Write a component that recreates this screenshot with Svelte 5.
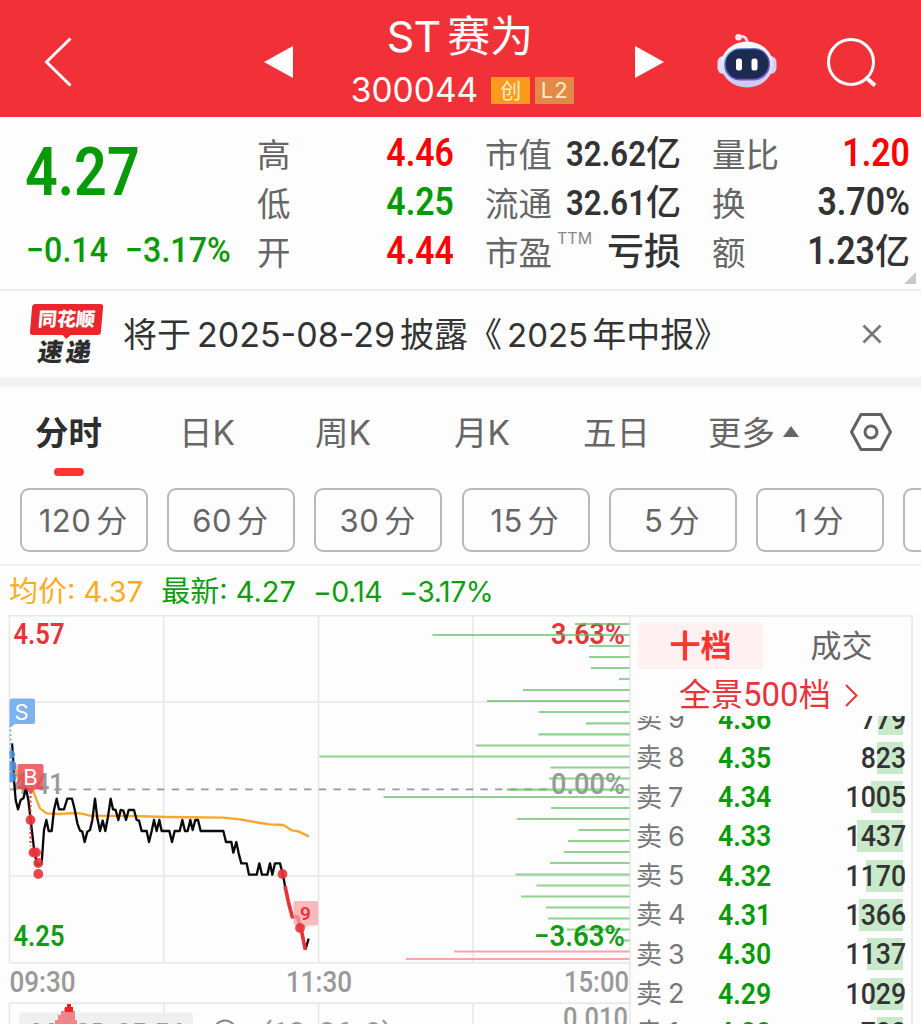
<!-- ============================================================
  App.svelte
  Stock detail page: header, quote stats, notice, period tabs,
  intraday chart and the ten-level order book.
  ============================================================ -->
<script lang="ts">
  // ── Quote stats ──────────────────────────────────────────
  const dayRange = [
    { label: '高', value: '4.46', tone: 'up' },
    { label: '低', value: '4.25', tone: 'down' },
    { label: '开', value: '4.44', tone: 'up' },
  ];

  const valuation = [
    { label: '市值', value: '32.62', unit: '亿' },
    { label: '流通', value: '32.61', unit: '亿' },
    { label: '市盈', note: 'TTM', value: '', unit: '亏损' },
  ];

  const activity = [
    { label: '量比', value: '1.20', unit: '', tone: 'up' },
    { label: '换', value: '3.70%', unit: '', tone: '' },
    { label: '额', value: '1.23', unit: '亿', tone: '' },
  ];

  // ── Tabs and minute periods ──────────────────────────────
  const tabs = ['分时', '日K', '周K', '月K', '五日'];
  const minutes = ['120', '60', '30', '15', '5', '1'];
  let activeTab = $state('分时');

  // ── Volume by price: [y, left edge] ──────────────────────
  const RIGHT = 629.5;
  const sellBars = [
    [624, 575], [635, 432.5], [646, 589], [657, 589], [668, 591], [679, 619],
    [690, 523], [701, 487], [712, 538.5], [723.3, 586], [734.3, 538.5],
    [745.5, 476], [756.5, 319.5], [767.5, 550.5], [778.5, 549], [789.7, 506.5],
    [797, 383.5], [808, 551], [819, 517], [830, 578.5], [841, 568], [852, 564],
    [863, 550], [874.5, 515.5], [885.5, 536.5], [896.5, 521], [907.5, 546],
    [918.5, 548], [929.5, 567], [940.5, 624],
  ];
  const buyBars = [[951.5, 454], [959, 406]];

  const buyDots = [[30.5, 820], [33.5, 852.5], [36, 852.5], [38.3, 863], [38.3, 874], [282.5, 874], [300, 928]];

  // ── Order book ───────────────────────────────────────────
  const asks = [
    { level: 9, price: '4.36', qty: 779, bar: 25 },
    { level: 8, price: '4.35', qty: 823, bar: 26.5 },
    { level: 7, price: '4.34', qty: 1005, bar: 32 },
    { level: 6, price: '4.33', qty: 1437, bar: 46 },
    { level: 5, price: '4.32', qty: 1170, bar: 37 },
    { level: 4, price: '4.31', qty: 1366, bar: 44 },
    { level: 3, price: '4.30', qty: 1137, bar: 36.5 },
    { level: 2, price: '4.29', qty: 1029, bar: 33 },
    { level: 1, price: '4.28', qty: 788, bar: 26 },
  ];
</script>

<main class="page">
  <!-- Header -->
  <header class="header">
    <svg width="28" height="50" viewBox="0 0 28 50" fill="none" stroke="#fff" stroke-width="3">
      <path d="M26.500 1.500 2.500 25l24 23.500" />
    </svg>
    <svg class="header__prev" width="29" height="32" viewBox="0 0 29 32"><path d="M0 16 29 0v32z" fill="#fff" /></svg>
    <div class="header__title">
      <h1 class="header__name"><span class="header__st">ST</span>赛为</h1>
      <div class="header__code">
        <span>300044</span>
        <span class="tag">创</span>
        <span class="tag tag--l2">L2</span>
      </div>
    </div>
    <svg width="29" height="32" viewBox="0 0 29 32"><path d="M29 16 0 0v32z" fill="#fff" /></svg>
    <svg class="header__robot" width="60" height="56" viewBox="0 0 60 56">
      <defs>
        <linearGradient id="shell" x1="0" y1="0" x2="0" y2="1">
          <stop offset="0" stop-color="#fff" />
          <stop offset="1" stop-color="#c9c6f2" />
        </linearGradient>
        <linearGradient id="rim" x1="0" y1="0" x2="1" y2="1">
          <stop offset="0" stop-color="#7fd4ea" />
          <stop offset="0.5" stop-color="#5b4fc0" />
          <stop offset="1" stop-color="#8d5be0" />
        </linearGradient>
      </defs>
      <path d="M21 3.500c6-1 9 1 9.500 7" fill="none" stroke="#f3dff0" stroke-width="2.600" />
      <circle cx="21.500" cy="4.200" r="3.300" fill="#f8e4ee" />
      <rect x="0.500" y="23" width="12" height="18" rx="6" fill="#e3e1fa" />
      <rect x="47.500" y="23" width="12" height="18" rx="6" fill="#d3cff5" />
      <ellipse cx="30" cy="31.500" rx="26" ry="23" fill="url(#shell)" />
      <rect x="7" y="15" width="46" height="32.500" rx="16" fill="url(#rim)" />
      <rect x="8.500" y="16.200" width="43" height="29.500" rx="14.700" fill="#1d2a51" />
      <rect x="19" y="25.500" width="6" height="12" rx="2.500" fill="#fff" />
      <rect x="34.500" y="25.500" width="6" height="12" rx="2.500" fill="#fff" />
    </svg>
    <svg class="header__search" width="52" height="52" viewBox="0 0 52 52" fill="none" stroke="#fff" stroke-width="3">
      <circle cx="25" cy="25" r="22.500" />
      <path d="m39.500 40 9.500 8.500" stroke-width="4" />
    </svg>
  </header>

  <!-- Quote -->
  <section class="quote">
    <div class="quote__main">
      <div class="quote__price"><span class="din din--left">4.27</span></div>
      <div class="quote__change">
        <span class="din din--left">−0.14</span>
        <span class="din din--left">−3.17%</span>
      </div>
    </div>
    <dl class="stats stats--range">
      {#each dayRange as item}
        <div class="stats__row">
          <dt>{item.label}</dt>
          <dd class={item.tone}><span class="din din--big">{item.value}</span></dd>
        </div>
      {/each}
    </dl>
    <dl class="stats stats--value">
      {#each valuation as item}
        <div class="stats__row">
          <dt>{item.label}{#if item.note}<sup>{item.note}</sup>{/if}</dt>
          <dd><span class="din">{item.value}</span><span class:loss={item.note}>{item.unit}</span></dd>
        </div>
      {/each}
    </dl>
    <dl class="stats stats--activity">
      {#each activity as item}
        <div class="stats__row">
          <dt>{item.label}</dt>
          <dd class={item.tone}><span class="din din--big">{item.value}</span>{item.unit}</dd>
        </div>
      {/each}
    </dl>
    <svg class="quote__corner" width="12" height="12" viewBox="0 0 12 12"><path d="M12 0v12H0z" fill="#c8c8c8" /></svg>
  </section>

  <!-- Notice -->
  <section class="notice">
    <div class="logo">
      <div class="logo__brand"><span>同花顺</span></div>
      <div class="logo__sub">速递</div>
    </div>
    <p class="notice__text">将于<span class="notice__date">2025-08-29</span>披露《<span class="notice__year">2025</span>年中报》</p>
    <svg width="20" height="20" viewBox="0 0 20 20" stroke="#777" stroke-width="2.600"><path d="m1.500 1.500 17 17m0-17-17 17" /></svg>
  </section>

  <!-- Period tabs -->
  <nav class="tabs">
    {#each tabs as tab}
      <button class="tabs__item" class:tabs__item--active={tab === activeTab} onclick={() => (activeTab = tab)}>{tab}</button>
    {/each}
    <button class="tabs__item tabs__more">
      更多
      <svg width="16" height="11" viewBox="0 0 16 11"><path d="M8 0 16 11H0z" fill="#666" /></svg>
    </button>
    <svg class="tabs__settings" width="42" height="38" viewBox="0 0 42 38" fill="none" stroke="#626262" stroke-width="3" stroke-linejoin="round">
      <path d="M11 1.500h20L40.500 19 31 36.500H11L1.500 19z" />
      <circle cx="21" cy="19" r="6" />
    </svg>
  </nav>

  <div class="minutes">
    {#each minutes as minute}
      <button class="minutes__item"><span>{minute}</span>分</button>
    {/each}
    <button class="minutes__item" aria-label="more"></button>
  </div>

  <!-- Chart and order book -->
  <div class="legend">
    <span class="legend__avg">均价: <b>4.37</b></span>
    <span>最新: <b>4.27</b></span>
    <span class="legend__diff">−0.14</span>
    <span class="legend__diff">−3.17%</span>
  </div>

  <div class="market">
    <svg class="chart" width="631" height="409" viewBox="0 615 631 409">
      <!-- Grid -->
      <g fill="none" stroke="#e6e6e6" stroke-width="1.500">
        <path d="M9.500 615.800h621M9.500 702h620M9.500 876h620M9.500 962.700h621" />
        <path d="M9.500 615v348M163.700 615v348M318.500 615v348M473 615v348M630 615v409" />
        <path d="M9.500 1003.300h621M9.500 1003v21M163.700 1003v21M318.500 1003v21M473 1003v21" />
      </g>
      <path d="M10 789.300h542" stroke="#999" stroke-width="1.800" stroke-dasharray="7.500 7.200" />

      <text class="num grey" x="13" y="794" font-size="29" textLength="51" lengthAdjust="spacingAndGlyphs">4.41</text>
      <text class="num grey" x="551" y="794" font-size="29" textLength="74" lengthAdjust="spacingAndGlyphs">0.00%</text>
      <text class="num red" x="13.500" y="643.500" font-size="29" textLength="51" lengthAdjust="spacingAndGlyphs">4.57</text>
      <text class="num red" x="551" y="643.500" font-size="29" textLength="74" lengthAdjust="spacingAndGlyphs">3.63%</text>

      <!-- Volume by price -->
      <g stroke="#62bd62" stroke-opacity="0.700" stroke-width="2.200">
        {#each sellBars as [y, x]}
          <line x1={x} x2={RIGHT} y1={y} y2={y} />
        {/each}
      </g>
      <g stroke="#f7a6a8" stroke-width="2.200">
        {#each buyBars as [y, x]}
          <line x1={x} x2={RIGHT} y1={y} y2={y} />
        {/each}
      </g>

      <text class="num green" x="13.500" y="945.500" font-size="29" textLength="51" lengthAdjust="spacingAndGlyphs">4.25</text>
      <text class="num green" x="534" y="945.500" font-size="29" textLength="91" lengthAdjust="spacingAndGlyphs">−3.63%</text>

      <!-- Average and price lines, drawn in third-pixel units -->
      <g transform="translate(0 780) scale(0.33333)" fill="none" stroke-width="7" stroke-linejoin="round">
        <path stroke="#f9a72b" d="M42-55 50-15 70-5 95 20 108 55 120 85 140 100 180 102 220 99 245 101 270 107 400 108 500 111 670 113 720 118 780 129 810 133 850 135 875 151 895 154 927 169" />
        <path
          stroke="#0a0a0a"
          d="M36-110 39-70 42 0 47 60 54 88 62 60 70 55 78 25 85 60 92 120 103 215 112 255 125 250 132 150 139 120 146 153 155 153 162 90 170 56 177 88 192 88 202 56 216 56 224 88 232 130 240 152 247 155 254 186 262 155 270 150 277 120 285 56 292 115 300 153 308 122 316 153 324 110 332 56 339 88 347 90 355 120 362 90 370 92 378 120 386 90 402 90 410 120 417 122 425 153 440 153 447 186 455 153 462 120 470 153 478 120 485 153 508 153 516 186 524 153 539 153 547 120 555 153 563 153 571 120 578 150 586 120 594 120 602 153 670 153 678 186 694 186 700 218 709 186 716 220 724 250 740 250 747 284 770 284 778 250 786 284 802 284 810 250 817 284 825 250 840 250 850 290 855 318M916 510 926 476"
        />
        <path stroke="#e8333a" stroke-width="11" d="M855 318 865 365 877 411 893 411 905 455 916 510" />
      </g>

      <!-- Sell marker -->
      <path d="M10.500 725v30" stroke="#7db2f0" stroke-width="2" stroke-dasharray="2 2.500" />
      <path d="M9.500 701q0-2.500 2.500-2.500h21q2 0 2 2v21.500q0 2-2 2H15l-5.500 4z" fill="#7db2f0" />
      <text class="mark" x="21.500" y="719.700" font-size="22">S</text>
      <g fill="#4a8fe0" fill-opacity="0.900">
        <path d="M9.500 750.500a4 4 0 0 1 5.500 4 4 4 0 0 1-5.500 4zM9.500 761a5 5 0 0 1 7 5 5 5 0 0 1-7 5zM9.500 772a5 5 0 0 1 7 5 5 5 0 0 1-7 5z" />
      </g>

      <!-- Buy markers -->
      <path d="M30.500 796v50" stroke="#e8333a" stroke-width="2" stroke-dasharray="2 2.500" />
      <path d="M19.500 764h22q2 0 2 2v21.500q0 2-2 2H35l-4.500 4-4.500-4h-6.500q-2 0-2-2V766q0-2 2-2z" fill="#e8474e" fill-opacity="0.820" />
      <text class="mark" x="30.500" y="784.500" font-size="22">B</text>
      <path d="M295.500 901h20.500q2 0 2 2v20.500q0 2-2 2h-8l-7 5-1-5h-4.500q-2 0-2-2V903q0-2 2-2z" fill="#f5a3a6" fill-opacity="0.750" />
      <text class="num red mark--nine" x="305.500" y="920" font-size="19">9</text>
      <g fill="#e8333a" fill-opacity="0.900">
        {#each buyDots as [cx, cy]}
          <circle {cx} {cy} r="4.900" />
        {/each}
      </g>

      <!-- Time axis -->
      <text class="num axis" x="9.500" y="992" font-size="29" textLength="66" lengthAdjust="spacingAndGlyphs">09:30</text>
      <text class="num axis" x="286" y="992" font-size="29" textLength="66" lengthAdjust="spacingAndGlyphs">11:30</text>
      <text class="num axis" x="564" y="992" font-size="29" textLength="65" lengthAdjust="spacingAndGlyphs">15:00</text>

      <!-- Indicator panel -->
      <rect x="19" y="1012.500" width="174" height="30" rx="3" fill="#efefef" />
      <path d="M55 1024v-4h3v-5h3v-4h3v-3h9v3h2v9h2v4z" fill="#f0868b" />
      <path d="M65 1012v-5h2v-3h4v3h2v5z" fill="#fb1d22" />
      <circle cx="225" cy="1031.500" r="11" fill="none" stroke="#888" stroke-width="2" />
      <text class="num axis" x="32" y="1042.500" font-size="27">MACD:05.56</text>
      <text class="num axis" x="262" y="1043" font-size="29">(12, 26, 9)</text>
      <text class="num axis" x="563" y="1028" font-size="29" textLength="65" lengthAdjust="spacingAndGlyphs">0.010</text>
    </svg>

    <aside class="book">
      <div class="book__tabs">
        <span class="book__tab book__tab--active">十档</span>
        <span class="book__tab">成交</span>
      </div>
      <div class="book__all">
        全景<span>500</span>档
        <svg width="13" height="23" viewBox="0 0 13 23" fill="none" stroke="#e8333a" stroke-width="2"><path d="m1 1 10.500 10.500L1 22" /></svg>
      </div>
      <div class="book__list">
        {#each asks as ask}
          <div class="ask">
            <span class="ask__level">卖<i>{ask.level}</i></span>
            <span class="ask__price"><span class="din din--left">{ask.price}</span></span>
            <span class="ask__qty">
              <span class="ask__bar" style="width: {ask.bar}px"></span>
              <span class="din">{ask.qty}</span>
            </span>
          </div>
        {/each}
      </div>
    </aside>
  </div>
</main>

<style>
  :global(body) {
    background: #fdfdfd;
    overflow: hidden;
  }

  .page {
    width: 921px;
    height: 1024px;
    overflow: hidden;
    display: flex;
    flex-direction: column;
    color: #333;
    font-family: Inter, 'Noto Sans CJK SC', sans-serif;
  }

  h1, dl, dd, p {
    margin: 0;
  }

  svg, button {
    flex: none;
  }

  button {
    padding: 0;
    border: 0;
    background: none;
    font: inherit;
    color: inherit;
  }

  /* Narrow numerals for prices and quantities */
  .din {
    display: inline-block;
    font-family: Roboto, sans-serif;
    font-weight: 600;
    transform: scaleX(0.89);
    transform-origin: right center;
  }

  .din--left {
    transform-origin: left center;
  }

  .up {
    color: #fe0000;
  }

  .down {
    color: #069a06;
  }

  /* ── Header ──────────────────────────────────────────────── */
  .header {
    flex: none;
    height: 117px;
    box-sizing: border-box;
    padding: 7px 0 0 44px;
    display: flex;
    align-items: center;
    background: #f23038;
    color: #fff;
  }

  .header__prev {
    margin-left: 192px;
  }

  .header__title {
    width: 342px;
    display: flex;
    flex-direction: column;
    align-items: center;
  }

  .header__name {
    font-size: 43px;
    font-weight: 400;
    line-height: 52px;
    margin: 0 8px 3px 0;
  }

  .header__st {
    margin-right: 7px;
    letter-spacing: -1px;
  }

  .header__code {
    display: flex;
    align-items: center;
    font-size: 33.500px;
    line-height: 50px;
    margin-right: 3px;
  }

  .tag {
    width: 39px;
    height: 27px;
    margin: 2px 0 0 13px;
    background: #fc9a1c;
    color: #fdebc8;
    font-size: 21px;
    line-height: 27px;
    text-align: center;
  }

  .tag--l2 {
    margin-left: 5px;
    background: #e28b48;
    font-size: 22px;
    letter-spacing: 1px;
  }

  .header__robot {
    margin: -2px 0 0 53px;
  }

  .header__search {
    margin: 1px 0 0 49px;
  }

  /* ── Quote ───────────────────────────────────────────────── */
  .quote {
    position: relative;
    flex: none;
    height: 174px;
    display: flex;
    border-bottom: 2px solid #ededed;
    box-sizing: border-box;
    padding: 12px 11px 0 26px;
  }

  .quote__main {
    width: 231px;
    color: #069a06;
  }

  .quote__price {
    height: 87px;
    font-size: 66px;
    line-height: 84px;
  }

  .quote__price .din {
    transform: translateX(-1px) scaleX(0.87);
  }

  .quote__change {
    display: flex;
    font-size: 35px;
    line-height: 70px;
  }

  .quote__change .din {
    width: 99px;
    font-weight: 500;
    transform: scaleX(0.92);
  }

  .stats__row {
    display: flex;
    justify-content: space-between;
    height: 49px;
    line-height: 49px;
  }

  .stats--range {
    width: 197px;
  }

  .stats--value {
    width: 196px;
    margin-left: 31px;
  }

  .stats--activity {
    width: 198px;
    margin-left: 31px;
  }

  dt {
    padding-top: 2px;
    font-size: 33.500px;
    color: #666;
    white-space: nowrap;
  }

  dd {
    font-size: 35px;
    font-weight: 500;
    white-space: nowrap;
  }

  .din--big {
    font-size: 38px;
  }

  sup {
    font-size: 16px;
    line-height: 0;
    vertical-align: 21px;
    margin-left: 5px;
    color: #888;
  }

  .loss {
    font-size: 37px;
    font-weight: 500;
  }

  .quote__corner {
    position: absolute;
    right: 5px;
    bottom: 5px;
  }

  /* ── Notice ──────────────────────────────────────────────── */
  .notice {
    flex: none;
    height: 96px;
    box-sizing: border-box;
    border-bottom: 10px solid #f2f2f2;
    display: flex;
    align-items: center;
    padding: 0 39px 0 31px;
  }

  .logo {
    width: 71px;
    margin-right: 21px;
    font-weight: 900;
    text-align: center;
    white-space: nowrap;
  }

  .logo__brand {
    position: relative;
    height: 31px;
    line-height: 31px;
    font-size: 19px;
    color: #fff;
    background: #e9262c;
    border-radius: 3px;
    transform: skewX(-5deg);
  }

  .logo__brand::after {
    content: '';
    position: absolute;
    left: 32px;
    top: 30px;
    border: 5px solid transparent;
    border-top-color: #e9262c;
    border-bottom: 0;
  }

  .logo__sub {
    height: 29px;
    line-height: 34px;
    font-size: 25px;
    letter-spacing: 3px;
    transform: skewX(-9deg);
    color: #2c2c2c;
  }

  .notice__text {
    flex: 1;
    padding-bottom: 4px;
    font-size: 34px;
    white-space: nowrap;
  }

  .notice__date {
    margin: 0 5px 0 6px;
  }

  .notice__year {
    margin: 0 4px 0 5px;
    font-size: 33px;
  }

  /* ── Tabs ────────────────────────────────────────────────── */
  .tabs {
    flex: none;
    height: 101px;
    box-sizing: border-box;
    display: flex;
    padding: 21px 29px 0 35px;
    font-size: 33.500px;
    line-height: 50px;
    color: #666;
  }

  .tabs__item {
    display: flex;
    flex-direction: column;
    align-items: center;
    height: 70px;
    margin-right: 77px;
  }

  .tabs__item:nth-child(2) {
    margin-right: 80px;
  }

  .tabs__item:nth-child(3) {
    margin-right: 83px;
  }

  .tabs__item:nth-child(4) {
    margin-right: 73px;
  }

  .tabs__item:nth-child(5) {
    margin-right: 58px;
  }

  .tabs__item--active {
    font-weight: 600;
    color: #2e2e2e;
  }

  .tabs__item--active::after {
    content: '';
    width: 30px;
    height: 8px;
    margin-top: 10px;
    border-radius: 4px;
    background: #fd3430;
  }

  .tabs__item.tabs__more {
    flex-direction: row;
    height: 50px;
    gap: 8px;
    margin-right: 0;
  }

  .tabs__more svg {
    margin-bottom: 3px;
  }

  .tabs__settings {
    margin: 5px 0 0 auto;
  }

  /* ── Minute periods ──────────────────────────────────────── */
  .minutes {
    flex: none;
    height: 78px;
    box-sizing: border-box;
    display: flex;
    gap: 19.200px;
    padding-left: 20px;
    border-bottom: 2px solid #f0f0f0;
  }

  .minutes__item {
    width: 128px;
    height: 64px;
    box-sizing: border-box;
    padding: 0 2px 4px 0;
    border: 2px solid #b9b9b9;
    border-radius: 9px;
    font-size: 31px;
    color: #666;
  }

  .minutes__item span {
    margin-right: 5px;
    letter-spacing: 0.500px;
  }

  /* ── Legend ──────────────────────────────────────────────── */
  .legend {
    flex: none;
    height: 49px;
    display: flex;
    align-items: baseline;
    gap: 18px;
    padding-left: 9px;
    font-size: 29px;
    line-height: 51px;
    color: #129c12;
    white-space: nowrap;
  }

  .legend b {
    font-weight: 400;
  }

  .legend__avg {
    color: #fbac24;
  }

  .legend__diff {
    font-size: 28.500px;
    letter-spacing: -0.500px;
    margin-left: -1px;
  }

  /* ── Chart ───────────────────────────────────────────────── */
  .market {
    display: flex;
    height: 409px;
  }

  .num {
    font-family: Roboto, sans-serif;
    font-weight: 600;
  }

  .grey,
  .axis {
    fill: #999;
    font-weight: 500;
  }

  .red {
    fill: #e8333a;
  }

  .green {
    fill: #129c12;
  }

  .mark {
    fill: #fff;
    text-anchor: middle;
  }

  .mark--nine {
    text-anchor: middle;
  }

  /* ── Order book ──────────────────────────────────────────── */
  .book {
    width: 282px;
    box-sizing: border-box;
    border-top: 2px solid #ececec;
    border-right: 2px solid #ececec;
    display: flex;
    flex-direction: column;
  }

  .book__tabs {
    display: flex;
    padding: 6px 0 0 7px;
    height: 46px;
    font-size: 31px;
    line-height: 46px;
    color: #666;
  }

  .book__tab {
    width: 125px;
    text-align: center;
    margin-right: 16px;
    flex: none;
  }

  .book__tab--active {
    border-radius: 4px;
    background: #fff1f1;
    color: #fd3430;
    font-weight: 600;
  }

  .book__all {
    height: 42px;
    padding: 5px 0 0 48px;
    display: flex;
    align-items: center;
    font-size: 32px;
    line-height: 42px;
    color: #e8333a;
  }

  .book__all span {
    font-family: Roboto, sans-serif;
    font-size: 33px;
  }

  .book__all svg {
    margin-left: 14px;
  }

  .book__list {
    flex: 1;
    overflow: hidden;
  }

  .ask {
    display: flex;
    align-items: center;
    height: 39.300px;
    padding: 0 5px 0 5px;
    line-height: 39.300px;
    font-size: 30px;
  }

  .ask:first-child {
    margin-top: -17.500px;
  }

  .ask__level {
    width: 82px;
    padding-top: 1px;
    font-size: 26px;
    color: #777;
  }

  .ask__level i {
    font-style: normal;
    font-size: 27px;
    margin-left: 6px;
  }

  .ask__price {
    color: #069a06;
  }

  .ask__qty {
    position: relative;
    margin-left: auto;
  }

  .ask__bar {
    position: absolute;
    right: 3px;
    top: 4px;
    height: 32px;
    background: #c9eaca;
  }

  .ask__qty .din {
    position: relative;
    font-weight: 500;
  }
</style>
